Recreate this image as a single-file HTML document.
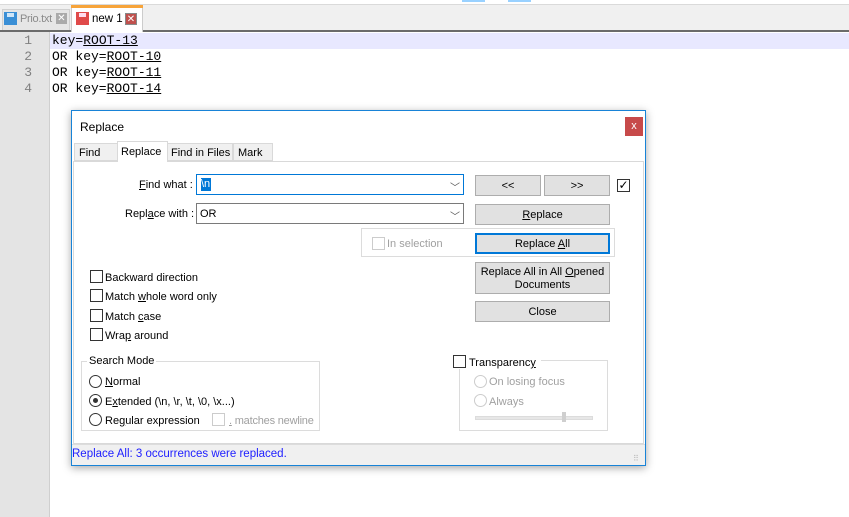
<!DOCTYPE html>
<html><head><meta charset="utf-8"><style>
*{box-sizing:border-box;margin:0;padding:0}
body{width:849px;height:517px;overflow:hidden;background:#fff;font-family:"Liberation Sans",sans-serif;font-size:11px;color:#000;position:relative}
.a{position:absolute}
.mono{font-family:"Liberation Mono",monospace;font-size:13px}
.u{text-decoration:underline}
.cb{position:absolute;width:13px;height:13px;border:1px solid #333;background:#fff}
.rb{position:absolute;width:13px;height:13px;border:1px solid #333;border-radius:50%;background:#fff}
.btn{position:absolute;background:#e1e1e1;border:1px solid #adadad;text-align:center;font-size:11px}
.lbl{position:absolute;white-space:nowrap}
.gray{color:#a0a0a0}
</style></head><body>
<div class="a" style="left:0;top:0;width:849px;height:4px;background:#fff"></div>
<div class="a" style="left:462px;top:0;width:23px;height:2px;background:#99d1ff"></div>
<div class="a" style="left:508px;top:0;width:23px;height:2px;background:#99d1ff"></div>
<div class="a" style="left:0;top:4px;width:849px;height:1px;background:#dadada"></div>
<div class="a" style="left:0;top:5px;width:849px;height:25px;background:#f0f0f0"></div>
<div class="a" style="left:0;top:30px;width:849px;height:2px;background:#6b6b6b"></div>
<!-- tabs -->
<div class="a" style="left:2px;top:9px;width:68px;height:21px;background:#e6e6e6;border:1px solid #d0d0d0;border-bottom:none"></div>
<div class="a" style="left:4px;top:12px;width:13px;height:13px;background:#3a8fd6"></div>
<div class="a" style="left:7px;top:13px;width:7px;height:4px;background:#cfe6f8"></div>
<div class="lbl" style="left:20px;top:13px;color:#8a8a8a;font-size:11px;letter-spacing:-0.3px">Prio.txt</div>
<div class="a" style="left:56px;top:13px;width:11px;height:11px;background:#aaa;color:#fff;font-size:10px;line-height:11px;text-align:center">✕</div>
<div class="a" style="left:71px;top:5px;width:72px;height:27px;background:#fff;border:1px solid #ccc;border-bottom:none"></div>
<div class="a" style="left:71px;top:5px;width:72px;height:3px;background:#f7a43a"></div>
<div class="a" style="left:76px;top:12px;width:13px;height:13px;background:#e04a4a"></div>
<div class="a" style="left:79px;top:13px;width:7px;height:4px;background:#fde"></div>
<div class="lbl" style="left:92px;top:13px;font-size:11.5px">new 1</div>
<div class="a" style="left:125px;top:13px;width:12px;height:12px;background:#c0504d;color:#fff;font-size:10px;line-height:12px;text-align:center;border:1px solid #888">✕</div>
<!-- editor -->
<div class="a" style="left:0;top:32px;width:50px;height:485px;background:#e4e4e4;border-right:1px solid #cfcfcf"></div>
<div class="a" style="left:50px;top:33px;width:799px;height:16px;background:#e8e8ff"></div>
<div class="a mono" style="left:0;top:33px;width:32px;text-align:right;color:#808080;line-height:16px">1<br>2<br>3<br>4</div>
<div class="a mono" style="left:52px;top:33px;line-height:16px;white-space:pre">key=<span class="u">ROOT-13</span>
OR key=<span class="u">ROOT-10</span>
OR key=<span class="u">ROOT-11</span>
OR key=<span class="u">ROOT-14</span></div>
<!-- dialog -->
<div class="a" style="left:71px;top:110px;width:575px;height:356px;background:#fff;border:1px solid #1883d7;box-shadow:0 2px 8px rgba(0,0,0,.35)"></div>
<div class="lbl" style="left:80px;top:120px;font-size:12px">Replace</div>
<div class="a" style="left:625px;top:117px;width:18px;height:19px;background:#c74a4a;color:#fff;text-align:center;font-size:11px;line-height:18px">x</div>
<!-- tab strip -->
<div class="a" style="left:74px;top:143px;width:44px;height:18px;background:#f0f0f0;border:1px solid #d9d9d9"></div>
<div class="lbl" style="left:79px;top:147px">Find</div>
<div class="a" style="left:167px;top:143px;width:66px;height:18px;background:#f0f0f0;border:1px solid #d9d9d9"></div>
<div class="lbl" style="left:171px;top:147px">Find in Files</div>
<div class="a" style="left:233px;top:143px;width:40px;height:18px;background:#f0f0f0;border:1px solid #d9d9d9"></div>
<div class="lbl" style="left:238px;top:147px">Mark</div>
<div class="a" style="left:73px;top:161px;width:571px;height:283px;background:#fff;border:1px solid #d9d9d9"></div>
<div class="a" style="left:117px;top:141px;width:51px;height:21px;background:#fff;border:1px solid #d9d9d9;border-bottom:none"></div>
<div class="lbl" style="left:121px;top:146px">Replace</div>
<!-- fields -->
<div class="lbl" style="left:139px;top:179px"><span class="u">F</span>ind what :</div>
<div class="a" style="left:196px;top:174px;width:268px;height:21px;border:1px solid #0078d7;background:#fff"></div>
<div class="a" style="left:201px;top:178px;width:10px;height:13px;background:#0078d7;color:#fff;font-size:11px;line-height:13px">\n</div>
<div class="lbl" style="left:450px;top:179px;color:#555;font-size:10px">﹀</div>
<div class="lbl" style="left:125px;top:208px">Repl<span class="u">a</span>ce with :</div>
<div class="a" style="left:196px;top:203px;width:268px;height:21px;border:1px solid #7a7a7a;background:#fff"></div>
<div class="lbl" style="left:200px;top:208px">OR</div>
<div class="lbl" style="left:450px;top:208px;color:#555;font-size:10px">﹀</div>
<!-- right buttons -->
<div class="btn" style="left:475px;top:175px;width:66px;height:21px;line-height:20px">&lt;&lt;</div>
<div class="btn" style="left:544px;top:175px;width:66px;height:21px;line-height:20px">&gt;&gt;</div>
<div class="cb" style="left:617px;top:179px;border-color:#333;font-size:12px;line-height:11px;text-align:center">✓</div>
<div class="btn" style="left:475px;top:204px;width:135px;height:21px;line-height:20px"><span class="u">R</span>eplace</div>
<div class="a" style="left:361px;top:228px;width:254px;height:29px;border:1px solid #dcdcdc"></div>
<div class="cb" style="left:372px;top:237px;border-color:#ccc"></div>
<div class="lbl gray" style="left:387px;top:238px">In selection</div>
<div class="btn" style="left:475px;top:233px;width:135px;height:21px;line-height:18px;border:2px solid #0078d7">Replace <span class="u">A</span>ll</div>
<div class="btn" style="left:475px;top:262px;width:135px;height:32px;line-height:13px;padding-top:3px">Replace All in All <span class="u">O</span>pened<br>Documents</div>
<div class="btn" style="left:475px;top:301px;width:135px;height:21px;line-height:20px">Close</div>
<!-- checkboxes -->
<div class="cb" style="left:90px;top:270px"></div><div class="lbl" style="left:105px;top:272px">Backward direction</div>
<div class="cb" style="left:90px;top:289px"></div><div class="lbl" style="left:105px;top:291px">Match <span class="u">w</span>hole word only</div>
<div class="cb" style="left:90px;top:309px"></div><div class="lbl" style="left:105px;top:311px">Match <span class="u">c</span>ase</div>
<div class="cb" style="left:90px;top:328px"></div><div class="lbl" style="left:105px;top:330px">Wra<span class="u">p</span> around</div>
<!-- search mode -->
<div class="a" style="left:81px;top:361px;width:239px;height:70px;border:1px solid #dcdcdc"></div>
<div class="lbl" style="left:87px;top:355px;background:#fff;padding:0 2px">Search Mode</div>
<div class="rb" style="left:89px;top:375px"></div><div class="lbl" style="left:105px;top:376px"><span class="u">N</span>ormal</div>
<div class="rb" style="left:89px;top:394px"><div style="position:absolute;left:3px;top:3px;width:5px;height:5px;border-radius:50%;background:#333"></div></div>
<div class="lbl" style="left:105px;top:396px">E<span class="u">x</span>tended (\n, \r, \t, \0, \x...)</div>
<div class="rb" style="left:89px;top:413px"></div><div class="lbl" style="left:105px;top:415px">Re<span class="u">g</span>ular expression</div>
<div class="cb" style="left:212px;top:413px;border-color:#ccc"></div>
<div class="lbl gray" style="left:229px;top:415px;letter-spacing:-0.2px"><span class="u">.</span> matches newline</div>
<!-- transparency -->
<div class="a" style="left:459px;top:360px;width:149px;height:71px;border:1px solid #dcdcdc"></div>
<div class="a" style="left:451px;top:355px;width:90px;height:14px;background:#fff"></div>
<div class="cb" style="left:453px;top:355px"></div>
<div class="lbl" style="left:469px;top:357px">Transparenc<span class="u">y</span></div>
<div class="rb" style="left:474px;top:375px;border-color:#ccc"></div><div class="lbl gray" style="left:489px;top:376px">On losing focus</div>
<div class="rb" style="left:474px;top:394px;border-color:#ccc"></div><div class="lbl gray" style="left:489px;top:396px">Always</div>
<div class="a" style="left:475px;top:416px;width:118px;height:4px;background:#e7e7e7;border:1px solid #dcdcdc"></div>
<div class="a" style="left:562px;top:412px;width:4px;height:10px;background:#cfcfcf"></div>
<!-- status -->
<div class="a" style="left:72px;top:444px;width:573px;height:21px;background:#f0f0f0;border-top:1px solid #dcdcdc"></div>
<div class="lbl" style="left:72px;top:448px;color:#2020ff;font-size:11.5px">Replace All: 3 occurrences were replaced.</div>
<div class="lbl" style="left:633px;top:454px;color:#bbb;font-size:8px;letter-spacing:-1px">⠿</div>
</body></html>
